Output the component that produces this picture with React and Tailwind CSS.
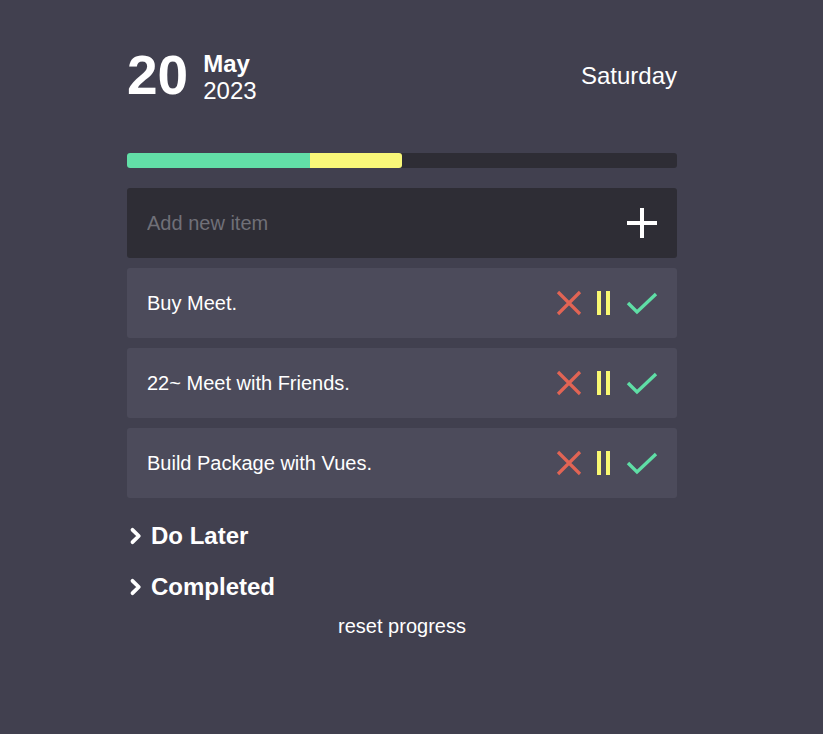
import React from 'react';

const ITEMS = ['Buy Meet.', '22~ Meet with Friends.', 'Build Package with Vues.'];

function Cross() {
    return (
        <svg width="26" height="26" viewBox="0 0 26 26" fill="none" stroke="#e16454" strokeWidth="3.2">
            <path d="M2 2 L24 24 M24 2 L2 24" />
        </svg>
    );
}

function Pause() {
    return (
        <svg width="16" height="26" viewBox="0 0 16 26" fill="#f9f871">
            <rect x="1" y="1" width="4" height="24" />
            <rect x="10" y="1" width="4" height="24" />
        </svg>
    );
}

function Check() {
    return (
        <svg width="32" height="26" viewBox="0 0 32 26" fill="none" stroke="#5fdea6" strokeWidth="3.4">
            <path d="M2 13 L11 22 L30 4" />
        </svg>
    );
}

function Chevron() {
    return (
        <svg width="14" height="18" viewBox="0 0 14 18" fill="none" stroke="white" strokeWidth="3.8" strokeLinecap="round" strokeLinejoin="round">
            <path d="M3.5 2.8 L9.8 9 L3.5 15.2" />
        </svg>
    );
}

export default function App() {
    return (
        <div className="min-h-[734px] bg-[#41404f] text-white" style={{ fontFamily: '"Liberation Sans", Arial, sans-serif' }}>
            <div className="w-[550px] ml-[127px] pt-[48px]">
                <div className="flex items-center justify-between h-[55px]">
                    <div className="flex items-center gap-[15px]">
                        <span className="text-[55px] font-bold leading-none">20</span>
                        <div className="flex flex-col leading-[27px] text-[24px] pt-[2px]">
                            <span className="font-bold">May</span>
                            <span>2023</span>
                        </div>
                    </div>
                    <span className="text-[24px]">Saturday</span>
                </div>

                <div className="mt-[50px] h-[15px] rounded-[3px] bg-[#2e2d35] flex overflow-hidden">
                    <div className="w-[183px] bg-[#62dfa7]" />
                    <div className="w-[92px] bg-[#f9f879] rounded-r-[3px]" />
                </div>

                <div className="mt-[20px] h-[70px] rounded-[3px] bg-[#2e2d35] flex items-center justify-between pl-[20px] pr-[20px]">
                    <input
                        className="bg-transparent outline-none text-[20px] text-white placeholder:text-[#707078] flex-1"
                        placeholder="Add new item"
                    />
                    <svg width="30" height="30" viewBox="0 0 30 30" fill="white">
                        <rect x="13" y="0" width="4" height="30" />
                        <rect x="0" y="13" width="30" height="4" />
                    </svg>
                </div>

                <div className="mt-[10px] flex flex-col gap-[10px]">
                    {ITEMS.map(item => (
                        <div key={item} className="h-[70px] rounded-[3px] bg-[#4c4b5b] flex items-center justify-between pl-[20px] pr-[19px]">
                            <span className="text-[20px]">{item}</span>
                            <div className="flex items-center gap-[14px]">
                                <Cross />
                                <Pause />
                                <Check />
                            </div>
                        </div>
                    ))}
                </div>

                <div className="mt-[20px] flex items-center gap-[8px] pl-[2px]">
                    <Chevron />
                    <span className="text-[24px] font-bold">Do Later</span>
                </div>
                <div className="mt-[15px] flex items-center gap-[8px] pl-[2px]">
                    <Chevron />
                    <span className="text-[24px] font-bold">Completed</span>
                </div>
                <div className="mt-[6px] text-center text-[20px]">reset progress</div>
            </div>
        </div>
    );
}
